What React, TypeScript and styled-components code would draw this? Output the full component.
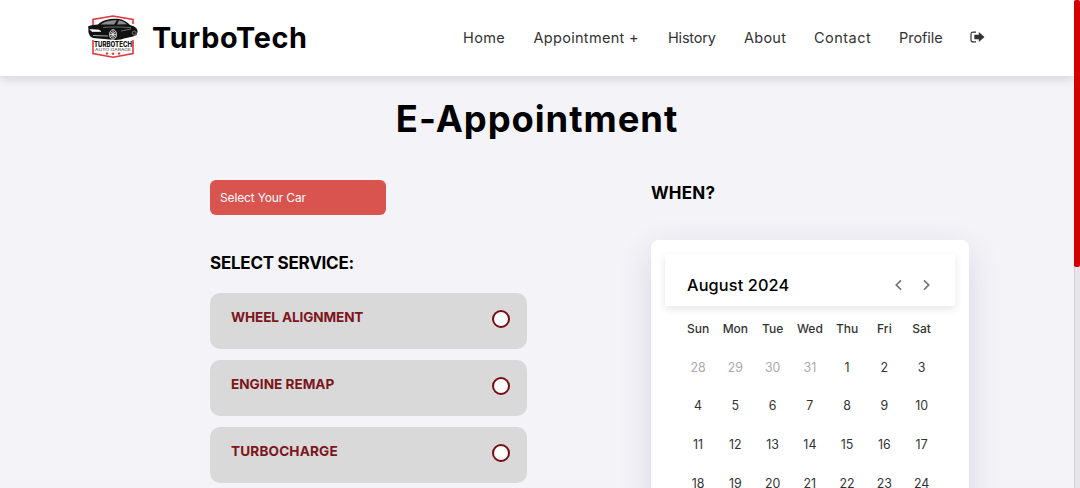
import React from "react";
import styled, { createGlobalStyle } from "styled-components";

const GlobalStyle = createGlobalStyle`
  * { box-sizing: border-box; }
  body { margin: 0; overflow: hidden; background: #f4f3f8; font-family: Inter, "Noto Sans", sans-serif; color: #000; }
  h1, h2, h3, p { margin: 0; }
`;

const Page = styled.div`
  display: flex;
  height: 488px;
  overflow: hidden;
`;

const Main = styled.div`
  width: 1074px;
  flex: none;
  overflow: hidden;
`;

const ScrollTrack = styled.div`
  width: 6px;
  flex: none;
  background: #e6e6e6;
  border-left: 1px solid #d2d2d4;
`;

const ScrollThumb = styled.div`
  width: 6px;
  height: 267px;
  margin-left: -1px;
  border-radius: 2px;
  background: #d20000;
`;

const Header = styled.header`
  display: flex;
  align-items: center;
  height: 76px;
  padding: 0 89px 0 86px;
  background: #fff;
  box-shadow: 0 3px 10px rgba(0, 0, 0, 0.13);
`;

const Brand = styled.span`
  margin-left: 12px;
  font-size: 28.8px;
  line-height: 40px;
  font-weight: 700;
  letter-spacing: 0.65px;
`;

const Nav = styled.nav`
  display: flex;
  align-items: center;
  margin-left: auto;
`;

const NavLink = styled.a<{ $width: number; $spacing: number }>`
  width: ${(p) => p.$width}px;
  white-space: nowrap;
  font-size: 14.5px;
  line-height: 22px;
  color: #333;
  letter-spacing: ${(p) => p.$spacing}px;
`;

const Title = styled.h1`
  margin-top: 19px;
  text-align: center;
  font-size: 36.4px;
  line-height: 48px;
  font-weight: 700;
  letter-spacing: 0.95px;
`;

const Columns = styled.div`
  display: flex;
  gap: 124px;
  padding: 37px 0 0 210px;
`;

const Services = styled.section`
  width: 317px;
`;

const CarSelect = styled.button`
  display: flex;
  align-items: center;
  width: 176px;
  height: 35px;
  padding: 0 10px;
  border: 0;
  border-radius: 6px;
  background: #d9534f;
  color: #fff;
  font: 400 12px Inter, sans-serif;
  letter-spacing: -0.15px;
`;

const Heading = styled.h2<{ $top: number; $spacing: number }>`
  margin-top: ${(p) => p.$top}px;
  font-size: 17px;
  line-height: 26px;
  font-weight: 700;
  letter-spacing: ${(p) => p.$spacing}px;
`;

const ServiceList = styled.div`
  display: flex;
  flex-direction: column;
  gap: 11px;
  margin-top: 17px;
`;

const ServiceCard = styled.label`
  display: flex;
  justify-content: space-between;
  height: 56px;
  padding: 14px 17.5px 0 21px;
  border-radius: 10px;
  background: #d9d9d9;
`;

const ServiceName = styled.span<{ $spacing: number }>`
  font-size: 13.6px;
  line-height: 21px;
  font-weight: 700;
  color: #7c151c;
  letter-spacing: ${(p) => p.$spacing}px;
`;

const Radio = styled.span`
  width: 18px;
  height: 18px;
  margin-top: 3px;
  border: 2px solid #7a0b12;
  border-radius: 50%;
  background: #fff;
`;

const When = styled.section`
  width: 318px;
`;

const Calendar = styled.div`
  height: 400px;
  margin-top: 34px;
  padding: 14px;
  border-radius: 8px;
  background: #fff;
  box-shadow: 0 10px 34px rgba(40, 35, 60, 0.12);
`;

const MonthBar = styled.div`
  display: flex;
  align-items: center;
  height: 52px;
  padding: 9px 20px 0 22px;
  background: #fff;
  box-shadow: 0 3px 8px rgba(0, 0, 0, 0.1);
`;

const Month = styled.h3`
  flex: 1;
  font-size: 16.3px;
  line-height: 24px;
  font-weight: 500;
  letter-spacing: 0.13px;
`;

const Arrows = styled.div`
  display: flex;
  gap: 12px;
  svg { display: block; }
`;

const Days = styled.div`
  display: grid;
  grid-template-columns: repeat(7, 37.25px);
  grid-auto-rows: 38.6px;
  margin: 3.4px 0 0 14.5px;
`;

const Cell = styled.span<{ $kind: "name" | "muted" | "day" }>`
  display: flex;
  align-items: center;
  justify-content: center;
  font-size: ${(p) => (p.$kind === "name" ? 12 : 12.4)}px;
  font-weight: ${(p) => (p.$kind === "name" ? 500 : 400)};
  color: ${(p) => (p.$kind === "muted" ? "#aaa" : "#333")};
`;

const links = [
  { label: "Home", width: 70.5, spacing: 0.4 },
  { label: "Appointment +", width: 134.5, spacing: 0.3 },
  { label: "History", width: 76, spacing: -0.2 },
  { label: "About", width: 70, spacing: 0.25 },
  { label: "Contact", width: 85, spacing: 0.48 },
  { label: "Profile", width: 71, spacing: -0.05 },
];

const services = [
  { name: "WHEEL ALIGNMENT", spacing: -0.13 },
  { name: "ENGINE REMAP", spacing: 0 },
  { name: "TURBOCHARGE", spacing: 0.15 },
];

const dayNames = ["Sun", "Mon", "Tue", "Wed", "Thu", "Fri", "Sat"];
const previous = [28, 29, 30, 31];
const dates = Array.from({ length: 24 }, (_, i) => i + 1);

function Logo() {
  return (
    <svg width="54" height="46" viewBox="0 0 54 46">
      <path d="M7 10V4.500L27 1L47 4.500V9M7 25V38.500L27 42.300L47 38.500V25" fill="none" stroke="#e0393e" strokeWidth="1.6" />
      <path d="M2 11.500C5 10 9 9.800 12 9.500C17 4.500 24 3.500 32 3.800C37 4.500 41 7 44 10C48 11 52 13 51.500 17L50.500 20L47 21.500L38 23.500L35 24.500L29 25L7 23C3 21.500 2 17 2.500 14Z" fill="#111" />
      <path d="M14.500 9.500C19 6 24 5 31 5.200L28 9.500ZM33 5.200C37 5.800 39 7.500 41 9.200L31 9.600Z" fill="#8d8d8d" />
      <path d="M4 14.500L13 15L15 16.500L6 16.500ZM7 20.500L22 21" fill="#fff" stroke="#eee" strokeWidth=".7" />
      <path d="M17 12.500Q27 11.500 45 12.500M35 16L45 14" fill="none" stroke="#aaa" strokeWidth=".6" />
      <ellipse cx="27" cy="19.500" rx="3.500" ry="4.800" fill="#333" stroke="#eee" strokeWidth=".9" />
      <path d="M27 15.700V23.300M24 19.500H30M25 17L29 22M29 17L25 22" stroke="#eee" strokeWidth=".8" />
      <circle cx="48.200" cy="18" r="2" fill="#222" stroke="#bbb" strokeWidth=".5" />
      <rect x="8" y="25.500" width="38" height="10.700" fill="#fff" />
      <text x="27" y="32" textAnchor="middle" textLength="38" lengthAdjust="spacingAndGlyphs" fontFamily="Inter, sans-serif" fontSize="7" fontWeight="800" fill="#111">TURBOTECH</text>
      <text x="27" y="36" textAnchor="middle" textLength="36" lengthAdjust="spacingAndGlyphs" fontFamily="Inter, sans-serif" fontSize="3.600" fill="#333">AUTO GARAGE</text>
      <path d="M21 37L22.500 38.500L21 40L19.500 38.500ZM27 37.300L28.500 38.800L27 40.300L25.500 38.800ZM33 37L34.500 38.500L33 40L31.500 38.500Z" fill="#e0393e" />
    </svg>
  );
}

function SignOut() {
  return (
    <svg width="15" height="14" viewBox="0 0 15 14">
      <path d="M6 1.100H3.200Q1 1.100 1 3.300V8.700Q1 10.900 3.200 10.900H6" fill="none" stroke="#333" strokeWidth="1.2" />
      <path d="M4.300 3.800H8.800V1L14.500 6L8.800 11V8.200H4.300Z" fill="#333" />
    </svg>
  );
}

function Chevron({ d }: { d: string }) {
  return (
    <svg width="16" height="16" viewBox="0 0 16 16">
      <path d={d} fill="none" stroke="#757575" strokeWidth="1.7" />
    </svg>
  );
}

export default function App() {
  return (
    <Page>
      <GlobalStyle />
      <Main>
        <Header>
          <Logo />
          <Brand>TurboTech</Brand>
          <Nav>
            {links.map((l) => (
              <NavLink key={l.label} $width={l.width} $spacing={l.spacing}>{l.label}</NavLink>
            ))}
            <SignOut />
          </Nav>
        </Header>
        <Title>E-Appointment</Title>
        <Columns>
          <Services>
            <CarSelect>Select Your Car</CarSelect>
            <Heading $top={35} $spacing={-0.25}>SELECT SERVICE:</Heading>
            <ServiceList>
              {services.map((s) => (
                <ServiceCard key={s.name}>
                  <ServiceName $spacing={s.spacing}>{s.name}</ServiceName>
                  <Radio />
                </ServiceCard>
              ))}
            </ServiceList>
          </Services>
          <When>
            <Heading $top={0} $spacing={0.2}>WHEN?</Heading>
            <Calendar>
              <MonthBar>
                <Month>August 2024</Month>
                <Arrows>
                  <Chevron d="M10 3.300L5.300 8L10 12.700" />
                  <Chevron d="M5 3.300L9.700 8L5 12.700" />
                </Arrows>
              </MonthBar>
              <Days>
                {dayNames.map((d) => <Cell key={d} $kind="name">{d}</Cell>)}
                {previous.map((d) => <Cell key={"p" + d} $kind="muted">{d}</Cell>)}
                {dates.map((d) => <Cell key={d} $kind="day">{d}</Cell>)}
              </Days>
            </Calendar>
          </When>
        </Columns>
      </Main>
      <ScrollTrack>
        <ScrollThumb />
      </ScrollTrack>
    </Page>
  );
}
